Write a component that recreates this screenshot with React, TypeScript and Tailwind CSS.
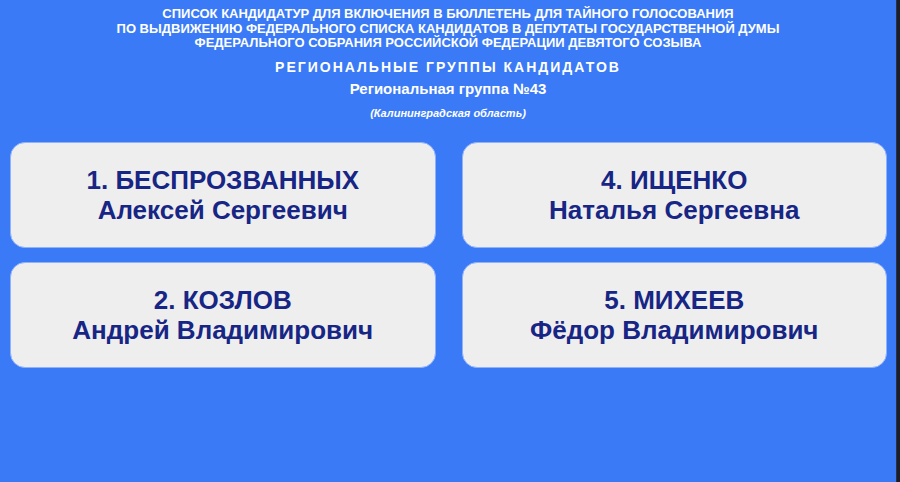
const candidates = [
  { num: 1, last: 'БЕСПРОЗВАННЫХ', name: 'Алексей Сергеевич' },
  { num: 4, last: 'ИЩЕНКО', name: 'Наталья Сергеевна' },
  { num: 2, last: 'КОЗЛОВ', name: 'Андрей Владимирович' },
  { num: 5, last: 'МИХЕЕВ', name: 'Фёдор Владимирович' },
];

function CandidateCard({ num, last, name }: { num: number; last: string; name: string }) {
  return (
    <div className="flex h-[106px] flex-col items-center justify-center rounded-[15px] border border-[#8fb3fb] bg-[#eeeeee] text-center text-[26px] leading-[30px] font-bold text-[#172585]">
      <div>
        {num}. {last}
      </div>
      <div>{name}</div>
    </div>
  );
}

export default function App() {
  return (
    <div className="flex h-[482px] w-[900px] bg-[#3a7af7] font-['Liberation_Sans',Arial,sans-serif]">
      <div className="flex flex-1 flex-col">
        <header className="flex flex-col items-center pt-[7px] text-center text-white">
          <div className="text-[13px] leading-[14.5px] font-bold">
            <div>СПИСОК КАНДИДАТУР ДЛЯ ВКЛЮЧЕНИЯ В БЮЛЛЕТЕНЬ ДЛЯ ТАЙНОГО ГОЛОСОВАНИЯ</div>
            <div>ПО ВЫДВИЖЕНИЮ ФЕДЕРАЛЬНОГО СПИСКА КАНДИДАТОВ В ДЕПУТАТЫ ГОСУДАРСТВЕННОЙ ДУМЫ</div>
            <div>ФЕДЕРАЛЬНОГО СОБРАНИЯ РОССИЙСКОЙ ФЕДЕРАЦИИ ДЕВЯТОГО СОЗЫВА</div>
          </div>
          <div className="mt-[8px] text-[14px] leading-[16px] font-bold tracking-[2px]">
            РЕГИОНАЛЬНЫЕ ГРУППЫ КАНДИДАТОВ
          </div>
          <div className="mt-[5px] text-[15px] leading-[17px] font-bold">Региональная группа №43</div>
          <div className="mt-[10px] text-[11px] leading-[13px] font-bold italic">(Калининградская область)</div>
        </header>
        <main className="mt-[22px] grid grid-cols-2 gap-x-[26px] gap-y-[14px] px-[10px] pr-[9px]">
          {candidates.map((c) => (
            <CandidateCard key={c.num} {...c} />
          ))}
        </main>
      </div>
      <div className="w-[4px] border-l border-[#2a3146] bg-[#1a1e2c]" />
    </div>
  );
}
